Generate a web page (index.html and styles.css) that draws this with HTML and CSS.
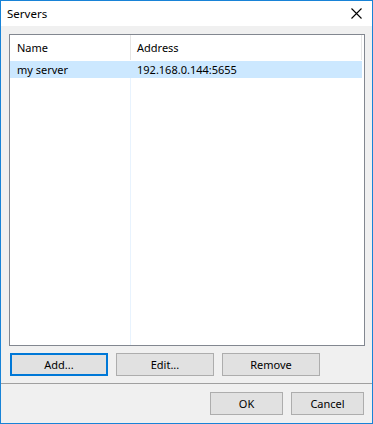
FILE: index.html
```html
<!DOCTYPE html>
<html lang="en">
<head>
    <meta charset="UTF-8">
    <title>Servers</title>
    <link rel="stylesheet" href="styles.css">
</head>
<body>
    <div class="window">
        <div class="titlebar">
            <span class="title">Servers</span>
            <svg class="close" width="11" height="11" viewBox="0 0 11 11">
                <path d="M0.5 0.5 L10.5 10.5 M10.5 0.5 L0.5 10.5" stroke="#000" stroke-width="1.1" fill="none"/>
            </svg>
        </div>

        <div class="content">
            <div class="listbox">
                <div class="row header">
                    <div class="col name">Name</div>
                    <div class="col addr">Address</div>
                </div>
                <div class="row selected">
                    <div class="col name">my server</div>
                    <div class="col addr">192.168.0.144:5655</div>
                </div>
                <div class="row filler">
                    <div class="col name"></div>
                    <div class="col addr"></div>
                </div>
            </div>

            <div class="actions">
                <button class="btn focused">Add...</button>
                <button class="btn">Edit...</button>
                <button class="btn">Remove</button>
            </div>
        </div>

        <div class="footer">
            <button class="btn small">OK</button>
            <button class="btn small">Cancel</button>
        </div>
    </div>
</body>
</html>
```

FILE: styles.css
```css
body {
    margin: 0;
    font-family: "Noto Sans", "Open Sans", sans-serif;
    font-size: 11px;
    color: #000;
}
.window {
    width: 373px;
    height: 424px;
    box-sizing: border-box;
    border: 1px solid #1883d7;
    background-color: #f0f0f0;
    display: flex;
    flex-direction: column;
}
.titlebar {
    height: 25px;
    background-color: #fff;
    display: flex;
    align-items: center;
    justify-content: space-between;
    padding: 0 10px 0 6px;
}
.title {
    font-size: 11.5px;
}
.close {
    display: block;
}
.content {
    padding: 8px 0 0 8px;
}
.listbox {
    width: 356px;
    height: 312px;
    box-sizing: border-box;
    border: 1px solid #828790;
    background-color: #fff;
    display: flex;
    flex-direction: column;
    padding-right: 2px;
}
.row {
    display: flex;
}
.col {
    box-sizing: border-box;
    padding-left: 7px;
}
.col.name {
    width: 121px;
    border-right: 1px solid #e5e5e5;
}
.col.addr {
    flex: 1;
    padding-left: 6px;
    border-right: 1px solid #e5e5e5;
}
.header {
    height: 25px;
    align-items: center;
}
.header .col {
    height: 25px;
    line-height: 25px;
}
.selected {
    height: 17px;
    line-height: 17px;
    background-color: #cce8ff;
    margin-top: 1px;
}
.selected .col {
    border-right-color: #cce8ff;
}
.filler {
    flex: 1;
}
.filler .col.name {
    border-right-color: #e8f3fe;
}
.filler .col.addr {
    border-right: none;
}
.actions {
    display: flex;
    gap: 8px;
    margin-top: 7px;
    padding-left: 1px;
}
.btn {
    font-family: inherit;
    font-size: 11px;
    color: #000;
    width: 98px;
    height: 23px;
    padding: 0;
    box-sizing: border-box;
    background-color: #e1e1e1;
    border: 1px solid #adadad;
}
.btn.focused {
    border: 2px solid #0078d7;
}
.btn.small {
    width: 73px;
}
.footer {
    margin-top: 7px;
    border-top: 1px solid #a0a0a0;
    display: flex;
    justify-content: flex-end;
    gap: 8px;
    padding: 8px 8px 0 0;
}
```
